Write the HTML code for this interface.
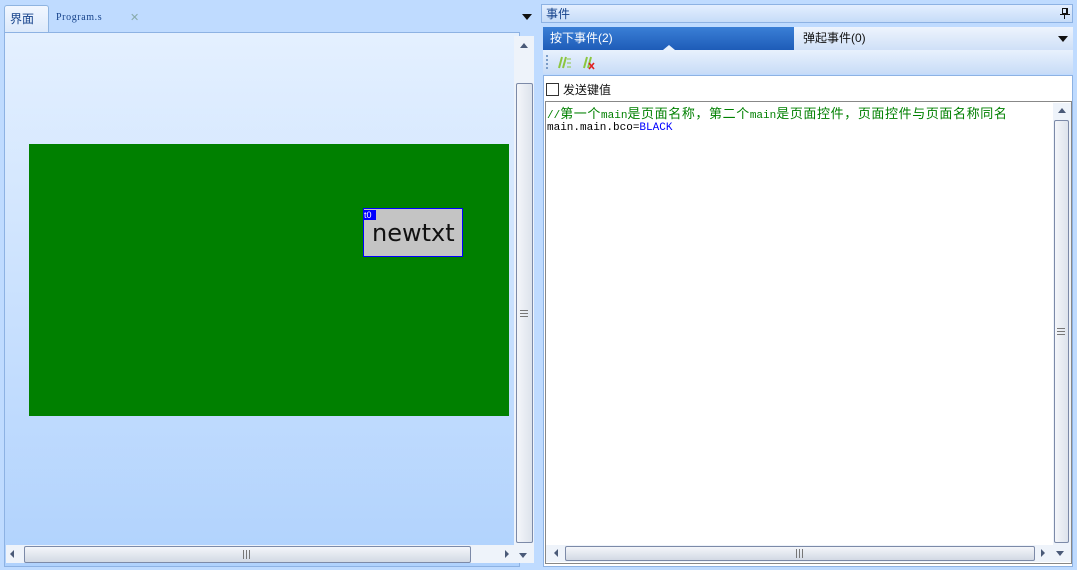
<!DOCTYPE html>
<html><head><meta charset="utf-8"><style>
*{margin:0;padding:0;box-sizing:border-box}
body{width:1077px;height:570px;background:#bfdbff;position:relative;overflow:hidden;font-family:"Liberation Sans","Noto Sans CJK SC",sans-serif;font-size:12px}
.a{position:absolute}
.mono{font-family:"Liberation Mono","Noto Sans CJK SC",monospace;font-size:11px;white-space:nowrap}
.c{font-size:13px;letter-spacing:0.6px}
.sbv{background:linear-gradient(90deg,#f4f6fa,#dde3ec);border:1px solid #7c8aa8;border-radius:2px}
.sbh{background:linear-gradient(#f4f6fa,#d2d9e4);border:1px solid #7c8aa8;border-radius:2px}
.gv{width:8px;height:7px;border-top:1px solid #777;border-bottom:1px solid #777}
.gv:after{content:"";position:absolute;left:0;top:2px;width:8px;height:1px;background:#777}
.gh{width:7px;height:9px;border-left:1px solid #777;border-right:1px solid #777}
.gh:after{content:"";position:absolute;left:2px;top:0;width:1px;height:9px;background:#777}
</style></head><body>
<!-- left tabs -->
<div class="a" style="left:4px;top:5px;width:45px;height:28px;background:linear-gradient(#f2f7ff,#dbe9fb);border:1px solid #8fb4e0;border-bottom:none;border-radius:3px 3px 0 0"></div>
<div class="a" style="left:10px;top:10px;color:#15428b;font-size:12px">界面</div>
<div class="a" style="left:56px;top:12px;color:#15428b;font-size:10px;font-family:'Liberation Serif',serif;letter-spacing:0.6px">Program.s</div>
<div class="a" style="left:130px;top:11px;color:#8aa;font-size:11px">✕</div>
<div class="a" style="left:522px;top:14px;width:0;height:0;border-left:5px solid transparent;border-right:5px solid transparent;border-top:6px solid #111"></div>
<!-- left panel -->
<div class="a" style="left:4px;top:32px;width:516px;height:535px;border:1px solid #8db2e3;background:linear-gradient(#e4f0ff,#b0d2fd)"></div>
<div class="a" style="left:514px;top:36px;width:20px;height:510px;background:#eef3fa"></div>
<div class="a" style="left:520px;top:43px;border-left:4px solid transparent;border-right:4px solid transparent;border-bottom:5px solid #4a5a78"></div>
<div class="a sbv" style="left:516px;top:83px;width:17px;height:460px"></div>
<div class="a gv" style="left:520px;top:310px"></div>
<div class="a" style="left:6px;top:545px;width:528px;height:18px;background:#eef3fa"></div>
<div class="a" style="left:10px;top:550px;border-top:4px solid transparent;border-bottom:4px solid transparent;border-right:4px solid #4a5a78"></div>
<div class="a sbh" style="left:24px;top:546px;width:447px;height:17px"></div>
<div class="a gh" style="left:243px;top:550px"></div>
<div class="a" style="left:505px;top:550px;border-top:4px solid transparent;border-bottom:4px solid transparent;border-left:4px solid #4a5a78"></div>
<div class="a" style="left:519px;top:553px;border-left:4px solid transparent;border-right:4px solid transparent;border-top:5px solid #4a5a78"></div>
<!-- green screen -->
<div class="a" style="left:29px;top:144px;width:480px;height:272px;background:#008000"></div>
<div class="a" style="left:363px;top:208px;width:100px;height:49px;background:#c4c4c4;border:1px solid #00f"></div>
<div class="a" style="left:364px;top:210px;width:12px;height:10px;background:#00f;color:#fff;font-size:9px;line-height:10px">t0</div>
<div class="a" style="left:372px;top:219px;font-size:24px;color:#111;font-family:'DejaVu Sans',sans-serif">newtxt</div>
<!-- right header -->
<div class="a" style="left:541px;top:4px;width:532px;height:19px;background:linear-gradient(#e4efff,#c6dcf8);border:1px solid #8db2e3"></div>
<div class="a" style="left:546px;top:5px;color:#15428b;font-size:12px">事件</div>
<div class="a" style="left:1062px;top:8px;width:6px;height:6px;border:1px solid #111;border-right-width:2px"></div>
<div class="a" style="left:1060px;top:14px;width:10px;height:1px;background:#111"></div>
<div class="a" style="left:1064px;top:15px;width:1px;height:4px;background:#111"></div>
<!-- tabs -->
<div class="a" style="left:543px;top:27px;width:251px;height:23px;background:linear-gradient(#3a7fd6,#1e5cb8)"></div>
<div class="a" style="left:550px;top:29px;color:#fff;font-size:12px">按下事件(2)</div>
<div class="a" style="left:663px;top:45px;border-left:6px solid transparent;border-right:6px solid transparent;border-bottom:5px solid #e8f1fc"></div>
<div class="a" style="left:794px;top:27px;width:279px;height:23px;background:linear-gradient(#eef4fd,#cfe0f7)"></div>
<div class="a" style="left:803px;top:29px;color:#111;font-size:12px">弹起事件(0)</div>
<div class="a" style="left:1058px;top:36px;border-left:5px solid transparent;border-right:5px solid transparent;border-top:6px solid #111"></div>
<!-- toolbar -->
<div class="a" style="left:543px;top:50px;width:530px;height:24px;background:linear-gradient(#e8f1fd,#c8dcf7)"></div>
<div class="a" style="left:546px;top:55px;width:2px;height:14px;border-left:2px dotted #7a9cc8"></div>
<svg class="a" style="left:555px;top:55px" width="40" height="16">
<g stroke="#8cc63f" stroke-width="2" fill="none"><path d="M4 13 L7 2 M8 13 L11 2 M29 13 L32 2 M33 13 L36 2"/></g>
<g stroke="#8cc63f" stroke-width="1"><path d="M12 4h4M12 8h4M12 12h4"/></g>
<g stroke="#e02020" stroke-width="1.6"><path d="M34 8l5 6M39 8l-5 6"/></g>
</svg>
<!-- content -->
<div class="a" style="left:543px;top:75px;width:530px;height:492px;background:#fff;border:1px solid #8db2e3"></div>
<div class="a" style="left:546px;top:83px;width:13px;height:13px;border:1px solid #333;background:#fff"></div>
<div class="a" style="left:563px;top:81px;color:#111;font-size:12px">发送键值</div>
<div class="a" style="left:545px;top:101px;width:527px;height:463px;border:1px solid #888;background:#fff"></div>
<div class="a mono" style="left:547px;top:103px;color:#008000">//<span class="c">第一个</span>main<span class="c">是页面名称，第二个</span>main<span class="c">是页面控件，页面控件与页面名称同名</span></div>
<div class="a mono" style="left:547px;top:122px;color:#000">main.main.bco=<span style="color:#00f">BLACK</span></div>
<div class="a" style="left:1053px;top:103px;width:18px;height:443px;background:#eef3fa"></div>
<div class="a" style="left:1058px;top:108px;border-left:4px solid transparent;border-right:4px solid transparent;border-bottom:5px solid #4a5a78"></div>
<div class="a sbv" style="left:1054px;top:120px;width:15px;height:423px"></div>
<div class="a gv" style="left:1057px;top:328px"></div>
<div class="a" style="left:546px;top:545px;width:525px;height:17px;background:#eef3fa"></div>
<div class="a" style="left:554px;top:549px;border-top:4px solid transparent;border-bottom:4px solid transparent;border-right:4px solid #4a5a78"></div>
<div class="a sbh" style="left:565px;top:546px;width:470px;height:15px"></div>
<div class="a gh" style="left:796px;top:549px"></div>
<div class="a" style="left:1041px;top:549px;border-top:4px solid transparent;border-bottom:4px solid transparent;border-left:4px solid #4a5a78"></div>
<div class="a" style="left:1056px;top:551px;border-left:4px solid transparent;border-right:4px solid transparent;border-top:5px solid #4a5a78"></div>
</body></html>
